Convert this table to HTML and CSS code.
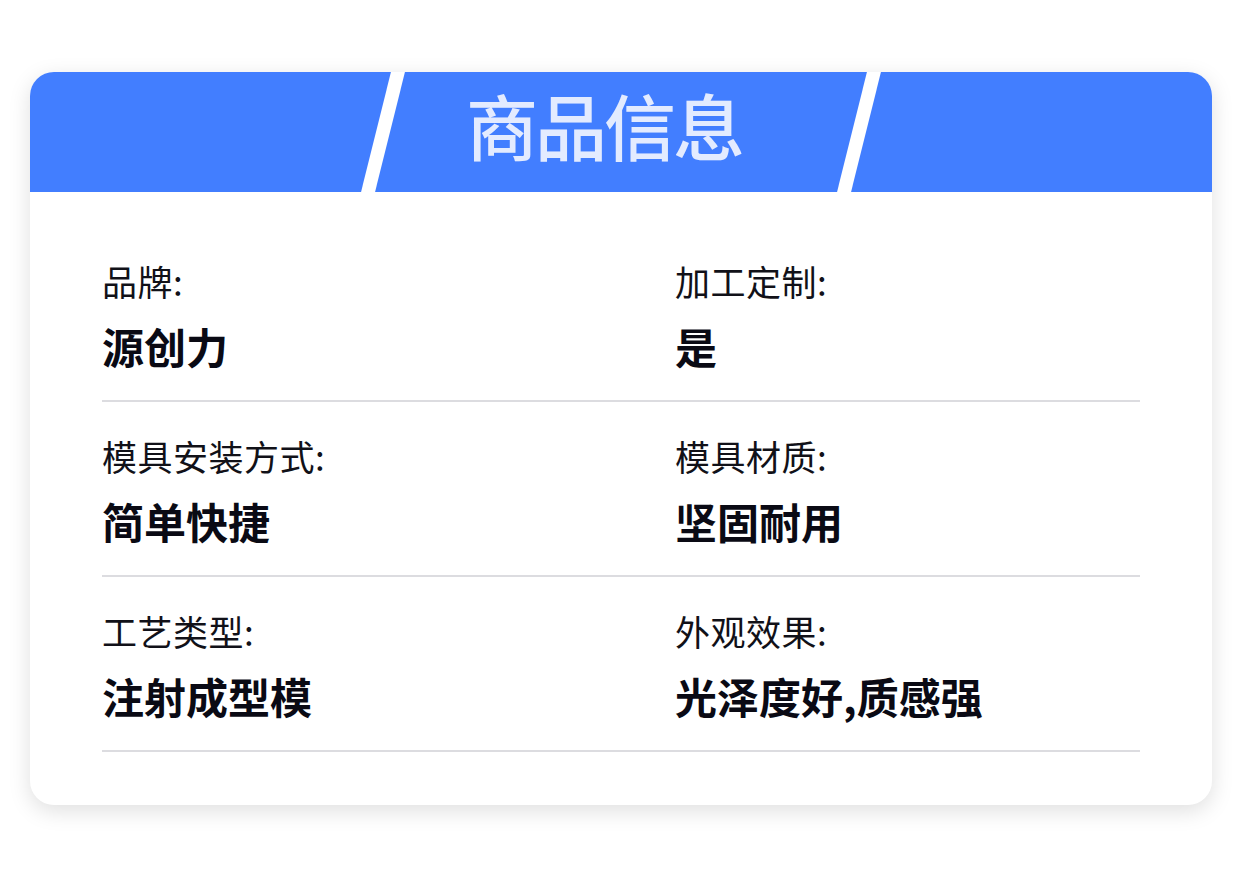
FILE: index.html
```html
<!DOCTYPE html>
<html lang="zh-CN">
<head>
<meta charset="utf-8">
<title>商品信息</title>
<link rel="stylesheet" href="styles.css">
</head>
<body>
<section class="card">
  <header class="card-head">
    <h1 class="card-title">商品信息</h1>
  </header>
  <div class="card-body">
    <div class="row">
      <div class="cell"><div class="label">品牌:</div><div class="value">源创力</div></div>
      <div class="cell"><div class="label">加工定制:</div><div class="value">是</div></div>
    </div>
    <div class="row">
      <div class="cell"><div class="label">模具安装方式:</div><div class="value">简单快捷</div></div>
      <div class="cell"><div class="label">模具材质:</div><div class="value">坚固耐用</div></div>
    </div>
    <div class="row">
      <div class="cell"><div class="label">工艺类型:</div><div class="value">注射成型模</div></div>
      <div class="cell"><div class="label">外观效果:</div><div class="value">光泽度好,质感强</div></div>
    </div>
  </div>
</section>
</body>
</html>
```
FILE: styles.css
```css
html, body {
  margin: 0;
  padding: 0;
  background: #ffffff;
}
body {
  font-family: "Noto Sans CJK SC", "Noto Sans", sans-serif;
  width: 1242px;
  height: 877px;
  overflow: hidden;
}
.card {
  margin: 72px 0 0 30px;
  width: 1182px;
  background: #ffffff;
  border-radius: 24px;
  overflow: hidden;
  box-shadow: 0 6px 22px rgba(0, 0, 0, 0.13);
}
.card-head {
  position: relative;
  height: 120px;
  box-sizing: border-box;
  background: #427eff;
  display: flex;
  align-items: center;
  justify-content: center;
  padding: 0 34px 16px 0;
}
.card-head::before,
.card-head::after {
  content: "";
  position: absolute;
  top: 0;
  width: 14px;
  height: 120px;
  background: #ffffff;
  transform: skewX(-14deg);
}
.card-head::before { left: 346px; }
.card-head::after { left: 822px; }
.card-title {
  margin: 0;
  font-size: 72px;
  line-height: 80px;
  font-weight: 500;
  letter-spacing: -3px;
  color: #e3ebff;
}
.card-body {
  padding: 35px 72px 53px;
}
.row {
  display: grid;
  grid-template-columns: 573px 1fr;
  padding: 34px 0 29px;
  border-bottom: 2px solid #dcdce0;
}
.cell {
  display: flex;
  flex-direction: column;
  gap: 20px;
}
.label {
  font-size: 35px;
  line-height: 40px;
  font-weight: 400;
  letter-spacing: 0.5px;
  color: #111118;
}
.value {
  font-size: 42px;
  line-height: 50px;
  font-weight: 700;
  color: #0a0a14;
}
```
